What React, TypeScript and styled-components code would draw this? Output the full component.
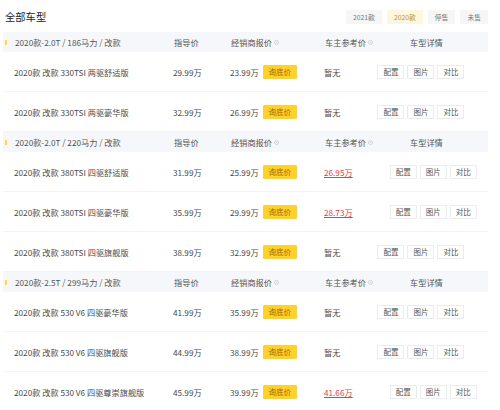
import React from 'react';
import styled, { createGlobalStyle } from 'styled-components';

const GlobalStyle = createGlobalStyle`
  body {
    margin: 0;
    background: #fff;
    font-family: "Noto Sans CJK SC", "Noto Sans", sans-serif;
  }
`;

type Car = { name: string; guide: string; dealer: string; owner?: string };
type Group = { title: string; cars: Car[] };

const groups: Group[] = [
  {
    title: '2020款-2.0T / 186马力 / 改款',
    cars: [
      { name: '2020款 改款 330TSI 两驱舒适版', guide: '29.99万', dealer: '23.99万' },
      { name: '2020款 改款 330TSI 两驱豪华版', guide: '32.99万', dealer: '26.99万' },
    ],
  },
  {
    title: '2020款-2.0T / 220马力 / 改款',
    cars: [
      { name: '2020款 改款 380TSI 四驱舒适版', guide: '31.99万', dealer: '25.99万', owner: '26.95万' },
      { name: '2020款 改款 380TSI 四驱豪华版', guide: '35.99万', dealer: '29.99万', owner: '28.73万' },
      { name: '2020款 改款 380TSI 四驱旗舰版', guide: '38.99万', dealer: '32.99万' },
    ],
  },
  {
    title: '2020款-2.5T / 299马力 / 改款',
    cars: [
      { name: '2020款 改款 530 V6 四驱豪华版', guide: '41.99万', dealer: '35.99万' },
      { name: '2020款 改款 530 V6 四驱旗舰版', guide: '44.99万', dealer: '38.99万' },
      { name: '2020款 改款 530 V6 四驱尊崇旗舰版', guide: '45.99万', dealer: '39.99万', owner: '41.66万' },
    ],
  },
];

const tabs = ['2021款', '2020款', '停售', '未售'];

const Page = styled.div`
  width: 500px;
  height: 410px;
  overflow: hidden;
  padding: 0 12px 0 3px;
  box-sizing: border-box;
`;

const TopBar = styled.div`
  height: 32px;
  display: flex;
  align-items: center;
  justify-content: space-between;
  padding-left: 2px;
`;

const Title = styled.div`
  font-size: 10.3px;
  color: #222;
  margin-top: 1px;
`;

const Tabs = styled.div`
  display: flex;
  gap: 5px;
  margin-top: 1px;
`;

const Tab = styled.div<{ $active?: boolean }>`
  height: 14px;
  padding: 0 7px;
  display: flex;
  align-items: center;
  justify-content: center;
  min-width: 12px;
  font-size: 6.8px;
  color: ${p => (p.$active ? '#b89447' : '#777')};
  background: ${p => (p.$active ? '#fff6de' : '#f6f6f7')};
`;

const HeaderRow = styled.div`
  height: 20px;
  display: flex;
  align-items: center;
  background: #f6f7fa;
  font-size: 8.2px;
  color: #555;
  padding-left: 2px;
`;

const Bar = styled.span`
  width: 2px;
  height: 5px;
  background: #ffd64a;
  margin-right: 8px;
`;

const Row = styled.div`
  height: 40px;
  display: flex;
  align-items: center;
  padding-left: 11px;
  font-size: 8.2px;
  color: #4a4a4a;
  box-sizing: border-box;
  border-bottom: 1px solid #f4f4f5;
`;

const NameCell = styled.div`
  width: 159px;
  white-space: nowrap;
`;

const GuideCell = styled.div`
  width: 57px;
`;

const DealerCell = styled.div`
  width: 94px;
  display: flex;
  align-items: center;
`;

const HeadWithTip = styled.div<{ $w: number }>`
  width: ${p => p.$w}px;
  display: flex;
  align-items: center;
  gap: 2px;
`;

const AskButton = styled.span`
  margin-left: 4px;
  height: 14px;
  width: 34px;
  display: inline-flex;
  align-items: center;
  justify-content: center;
  background: #ffd12e;
  color: #9c6a00;
  font-size: 7.5px;
  border-radius: 1px;
`;

const OwnerCell = styled.div`
  margin-right: 37px;
  white-space: nowrap;
`;

const OwnerPrice = styled.span`
  color: #d8444a;
  text-decoration: underline;
  text-underline-offset: 1px;
`;

const Actions = styled.div`
  display: flex;
  gap: 3px;
`;

const SmallButton = styled.span`
  width: 27px;
  height: 14px;
  box-sizing: border-box;
  border: 1px solid #ececee;
  display: inline-flex;
  align-items: center;
  justify-content: center;
  font-size: 7.5px;
  color: #555;
  background: #fff;
`;

const Tip = () => (
  <svg width="5" height="5" viewBox="0 0 10 10">
    <circle cx="5" cy="5" r="4" fill="none" stroke="#c4c4c8" strokeWidth="1.4" />
    <circle cx="5" cy="5" r="1.2" fill="#c4c4c8" />
  </svg>
);

const App = () => {
  return (
    <Page>
      <GlobalStyle />
      <TopBar>
        <Title>全部车型</Title>
        <Tabs>
          {tabs.map(t => (
            <Tab key={t} $active={t === '2020款'}>
              {t}
            </Tab>
          ))}
        </Tabs>
      </TopBar>
      {groups.map(g => (
        <div key={g.title}>
          <HeaderRow>
            <Bar />
            <NameCell>{g.title}</NameCell>
            <GuideCell>指导价</GuideCell>
            <HeadWithTip $w={94}>
              经销商报价
              <Tip />
            </HeadWithTip>
            <HeadWithTip $w={85}>
              车主参考价
              <Tip />
            </HeadWithTip>
            <div>车型详情</div>
          </HeaderRow>
          {g.cars.map(c => (
            <Row key={c.name}>
              <NameCell>{c.name}</NameCell>
              <GuideCell>{c.guide}</GuideCell>
              <DealerCell>
                {c.dealer}
                <AskButton>询底价</AskButton>
              </DealerCell>
              <OwnerCell>{c.owner ? <OwnerPrice>{c.owner}</OwnerPrice> : '暂无'}</OwnerCell>
              <Actions>
                <SmallButton>配置</SmallButton>
                <SmallButton>图片</SmallButton>
                <SmallButton>对比</SmallButton>
              </Actions>
            </Row>
          ))}
        </div>
      ))}
    </Page>
  );
};

export default App;
